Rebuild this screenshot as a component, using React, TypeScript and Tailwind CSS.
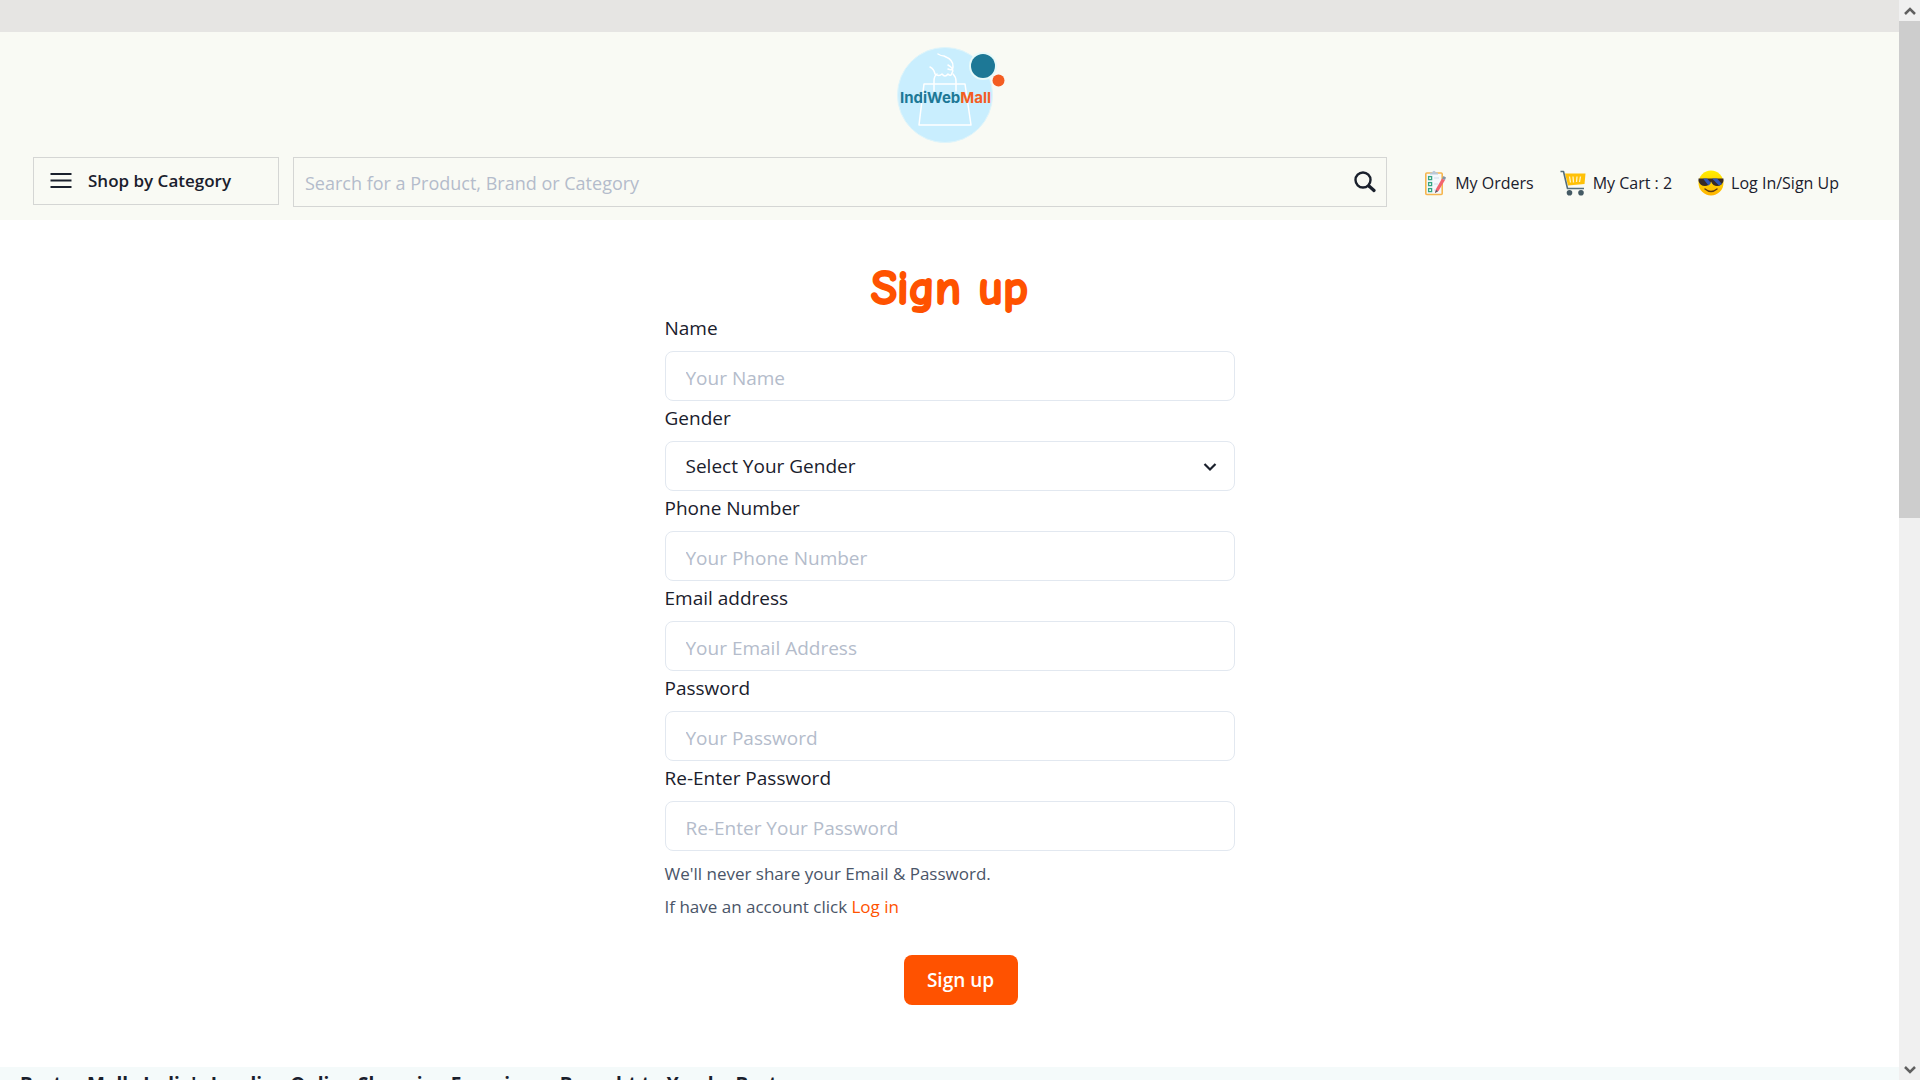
import React from 'react';

const ui = "font-['Open_Sans','Noto_Sans',sans-serif]";

function Logo() {
  return (
    <svg width="120" height="100" viewBox="0 0 120 100" role="img" aria-label="IndiWebMall">
      <circle cx="55" cy="50" r="47.5" fill="#c9eefe" stroke="#dff5fb" />
      <g fill="none" stroke="#fff" strokeWidth="1.5" strokeLinecap="round" strokeLinejoin="round">
        <path d="M34 39H75L81 80H29Z" />
        <path d="M44 46V36Q44 31 47 29M66 46V36Q66 32 63 29" />
        <path d="M48 9Q51 11 54 11Q64 15 63 22Q63 26 58 24M40 22Q44 24 45 29Q49 32 52 29Q55 33 58 29Q61 32 62 28Q65 24 58 20" />
      </g>
      <circle cx="93" cy="21" r="14" fill="#e8fafa" />
      <circle cx="93" cy="21" r="12" fill="#1d7896" />
      <circle cx="108.500" cy="35.500" r="6" fill="#f45d22" />
      <text x="10" y="58" fontFamily="Inter, sans-serif" fontWeight="700" fontSize="15" fill="#1d7896">
        IndiWeb<tspan fill="#f45d22">Mall</tspan>
      </text>
    </svg>
  );
}

function MenuIcon() {
  return (
    <svg width="22" height="16" viewBox="0 0 22 16" stroke="#1a202c" strokeWidth="2" aria-hidden="true">
      <path d="M0.500 1H21.500M0.500 7.500H21.500M0.500 14H21.500" />
    </svg>
  );
}

function SearchIcon() {
  return (
    <svg width="22" height="22" viewBox="0 0 22 22" fill="none" stroke="#1a202c" aria-hidden="true">
      <circle cx="9" cy="9" r="7.5" strokeWidth="2.4" />
      <path d="M15 15L20 19.5" strokeWidth="3.2" strokeLinecap="round" />
    </svg>
  );
}

function OrdersIcon() {
  return (
    <svg width="24" height="26" viewBox="0 0 24 26" aria-hidden="true">
      <rect x="1.8" y="3" width="16.4" height="21.5" rx="1" fill="#f4f8fc" stroke="#f6b64e" strokeWidth="1.6" />
      <path d="M6 4.5V2.5H8Q10 -1 12 2.5H14V4.5Z" fill="#b9c8d8" />
      <g fill="#fff" stroke="#35a583" strokeWidth="1.3">
        <rect x="4.6" y="6.6" width="3" height="3" />
        <rect x="4.6" y="12.6" width="3" height="3" />
        <rect x="4.6" y="18.6" width="3" height="3" />
      </g>
      <path d="M10 8H15M10 14H14M10 20H12" stroke="#dce5ee" strokeWidth="1.5" />
      <path d="M11 23L12 19L18 8.5L21 10L14.5 21Z" fill="#f2646f" />
      <path d="M18 8.5L19.5 6L22 7.5L21 10Z" fill="#8295a9" />
      <path d="M11 23L12 20L14 21.2Z" fill="#4a5a6a" />
    </svg>
  );
}

function CartIcon() {
  return (
    <svg width="26" height="26" viewBox="0 0 26 26" fill="none" aria-hidden="true">
      <path d="M5 3.500H25.500L24.500 14L8 15.500Z" fill="#ffc107" />
      <path d="M9.500 6.500L10.500 12.500M13 6.500L13.500 12.500M17 6.500L16.500 12M20.500 6.500L19.500 12" stroke="#fff3c4" strokeWidth="1.300" />
      <path d="M0.500 1.500H3.500L7.500 18.500H24" stroke="#546e7a" strokeWidth="1.600" strokeLinejoin="round" />
      <circle cx="9.500" cy="22.700" r="2.800" fill="#455a64" />
      <circle cx="21" cy="22.700" r="2.800" fill="#455a64" />
    </svg>
  );
}

function CoolIcon() {
  return (
    <svg width="26" height="26" viewBox="0 0 26 26" aria-hidden="true">
      <defs>
        <linearGradient id="face" x2="0" y2="1">
          <stop stopColor="#ffee00" />
          <stop offset="1" stopColor="#ffb300" />
        </linearGradient>
      </defs>
      <circle cx="13" cy="13" r="12.500" fill="url(#face)" />
      <path d="M0.500 8.500H25.500V11Q24 16 19 16Q15 16 13 11.500Q11 16 7 16Q2 16 0.500 11Z" fill="#392a24" />
      <path d="M5 8.500H9L13 13L10.500 15.500ZM14 8.500H19L24 14L21 15.500Z" fill="#2e55b5" />
      <path d="M7 19Q13 24 19 19" fill="none" stroke="#5c3a12" strokeWidth="1.400" strokeLinecap="round" />
    </svg>
  );
}

const arrow = 'flex h-[21px] items-center justify-center';

function ScrollTrack() {
  return (
    <div className="flex w-[21px] shrink-0 flex-col bg-[#f0f0f0]" aria-hidden="true">
      <div className={arrow}>
        <svg width="12" height="10" viewBox="0 0 12 10" fill="none" stroke="#606060" strokeWidth="2.500"><path d="M1 8L6 3L11 8" /></svg>
      </div>
      <div className="h-[46%] bg-[#cdcdcd]" />
      <div className={arrow + ' mt-auto'}>
        <svg width="12" height="10" viewBox="0 0 12 10" fill="none" stroke="#606060" strokeWidth="2.500"><path d="M1 2L6 7L11 2" /></svg>
      </div>
    </div>
  );
}

const caption = 'block pb-[6px] text-[19px] leading-[34px]';
const control =
  'h-[50px] w-full rounded-lg border border-[#e2e8f0] bg-white px-5 text-[19px] text-[#1a202c] outline-none placeholder:text-[#b4bccb]';

function Field({ id, label, type, hint }: { id: string; label: string; type: string; hint: string }) {
  return (
    <div>
      <label htmlFor={id} className={caption}>{label}</label>
      <input id={id} type={type} placeholder={hint} className={control + ' block pt-1'} />
    </div>
  );
}

export default function App() {
  return (
    <div className={'flex h-screen overflow-hidden text-[#1a202c] ' + ui}>
      <div className="min-w-0 flex-1 overflow-hidden bg-white">
        <div className="h-8 bg-[#e6e5e3]" />
        <header className="bg-[#f9faf4] pt-[13px] pb-[13px]">
          <div className="flex justify-center"><Logo /></div>
          <div className="mt-3 flex items-start pr-[60px] pl-[33px]">
            <button className="flex h-12 w-[246px] shrink-0 items-center gap-4 border border-[#d5d6d4] pl-4 text-[17px] font-semibold">
              <MenuIcon />
              Shop by Category
            </button>
            <form className="ml-[14px] flex h-[50px] flex-1 items-center border border-[#d5d6d4] pr-[10px] pl-[11px]">
              <input aria-label="Search" placeholder="Search for a Product, Brand or Category" className="h-full min-w-0 flex-1 pt-[2px] text-lg outline-none placeholder:text-[#b4bccb]" />
              <button type="button" aria-label="Search"><SearchIcon /></button>
            </form>
            <nav className="ml-[37px] flex h-[50px] items-center gap-[26px] pt-[2px] text-base whitespace-nowrap">
              <a href="#orders" className="flex items-center gap-[7px]"><OrdersIcon />My Orders</a>
              <a href="#cart" className="flex items-center gap-[7px]"><CartIcon />My Cart : 2</a>
              <a href="#login" className="flex items-center gap-[7px]"><CoolIcon />Log In/Sign Up</a>
            </nav>
          </div>
        </header>
        <main className="mx-auto w-full max-w-[570px] pt-11 pb-[62px]">
          <h1 className="pt-[2px] text-center font-['Comic_Sans_MS','Comic_Neue',Lato,sans-serif] text-5xl leading-[45px] font-bold text-[#ff5200] [-webkit-text-stroke:2px_#ff5200]">Sign up</h1>
          <form>
            <Field id="name" label="Name" type="text" hint="Your Name" />
            <div>
              <label htmlFor="gender" className={caption}>Gender</label>
              <div className="relative">
                <select id="gender" className={control + ' block appearance-none'}>
                  <option>Select Your Gender</option>
                </select>
                <svg className="pointer-events-none absolute top-[19px] right-[18px]" width="14" height="14" viewBox="0 0 14 14" fill="none" stroke="#1a202c" strokeWidth="2.200" aria-hidden="true"><path d="M1.500 4L7 9.500L12.500 4" /></svg>
              </div>
            </div>
            <Field id="phone" label="Phone Number" type="tel" hint="Your Phone Number" />
            <Field id="email" label="Email address" type="email" hint="Your Email Address" />
            <Field id="password" label="Password" type="password" hint="Your Password" />
            <Field id="again" label="Re-Enter Password" type="password" hint="Re-Enter Your Password" />
            <div className="pt-[6px] text-[17px] leading-[33px] text-[#4a5568]">
              <p>We'll never share your Email &amp; Password.</p>
              <p>If have an account click <a href="#login" className="text-[#ff5200]">Log in</a></p>
            </div>
            <button type="button" className="mt-8 ml-[239px] h-[50px] w-[114px] rounded-lg bg-[#ff5200] text-[19px] font-semibold text-white">Sign up</button>
          </form>
        </main>
        <footer className="bg-[#f4fafa] px-5 pt-[3px]">
          <h2 className="text-[19px] leading-7 font-bold whitespace-nowrap">Bestro Mall : India's Leading Online Shopping Experience Brought to You by Bestro</h2>
        </footer>
      </div>
      <ScrollTrack />
    </div>
  );
}
